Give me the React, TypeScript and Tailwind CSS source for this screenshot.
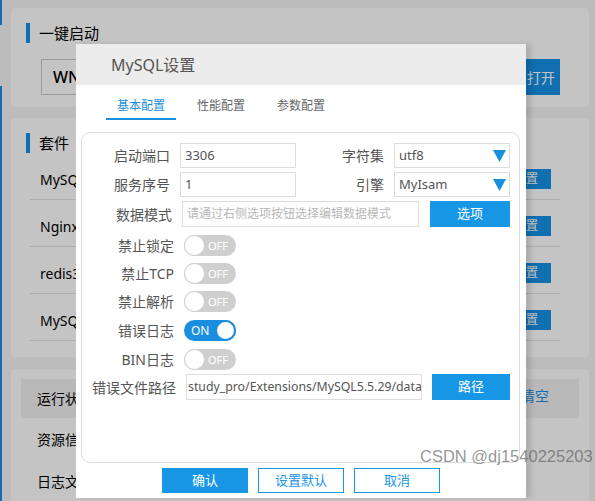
import React from "react";

const FONT = { fontFamily: '"Noto Sans","Noto Sans CJK SC",sans-serif' };

function Toggle({ on }: { on?: boolean }) {
  if (on) {
    return (
      <div className="relative w-[52px] h-[21px] rounded-full bg-[#1a8fe0] flex items-center">
        <span className="ml-[7px] text-[12px] leading-none text-white">ON</span>
        <div className="absolute right-0 top-0 w-[21px] h-[21px] rounded-full bg-white border-2 border-[#1a8fe0]" />
      </div>
    );
  }
  return (
    <div className="relative w-[52px] h-[21px] rounded-full bg-[#cfcfcf] flex items-center justify-end">
      <span className="mr-[8px] text-[11px] leading-none text-white">OFF</span>
      <div className="absolute left-0 top-0 w-[21px] h-[21px] rounded-full bg-white border border-[#cfcfcf]" />
    </div>
  );
}

function Tri() {
  return (
    <svg width="13" height="12" viewBox="0 0 13 12" className="shrink-0">
      <polygon points="0,0 13,0 6.5,12" fill="#1a8fe0" />
    </svg>
  );
}

export default function App() {
  const rows = ["MySQL5.5.29", "Nginx1.15.11", "redis3.0.504", "MySQL8.0.12"];
  return (
    <div className="relative w-[595px] h-[501px] overflow-hidden bg-[#f5f5f5]" style={FONT}>
      {/* page */}
      <div className="flex h-full">
        <div className="w-[2px] flex flex-col shrink-0">
          <div className="h-[25px] bg-[#1591e5]" />
          <div className="h-[61px]" />
          <div className="flex-1 bg-[#1591e5]" />
        </div>
        <div className="flex-1 pl-[9px] pr-[6px]">
          {/* panel 1 */}
          <div className="mt-[8px] h-[99px] bg-white rounded-[4px] pt-[15px] pl-[15px]">
            <div className="flex items-center gap-[9px] h-[20px]">
              <div className="w-[4px] h-[20px] bg-[#1591e5]" />
              <span className="text-[15px] text-black">一键启动</span>
            </div>
            <div className="mt-[16px] ml-[15px] flex h-[36px]">
              <div className="w-[481px] border border-[#c8c8c8] flex items-center pl-[11px] text-[16px] font-medium text-black">
                WNMP
              </div>
              <div className="w-[38px] bg-[#1591e5] text-white text-[14px] flex items-center justify-center">打开</div>
            </div>
          </div>
          {/* panel 2 */}
          <div className="mt-[11px] h-[239px] bg-white rounded-[4px] pt-[15px]">
            <div className="flex items-center gap-[9px] h-[20px] pl-[15px]">
              <div className="w-[4px] h-[20px] bg-[#1591e5]" />
              <span className="text-[15px] text-black">套件</span>
            </div>
            <div className="ml-[19px] w-[530px]">
              {rows.map((r) => (
                <div key={r} className="h-[47px] pt-[6px] border-b border-[#e2e2e2] flex items-center justify-between pl-[10px] pr-[9px]">
                  <span className="text-[14px] text-black">{r}</span>
                  <div className="w-[50px] h-[20px] bg-[#1591e5] text-white text-[12px] flex items-center justify-center">配置</div>
                </div>
              ))}
            </div>
          </div>
          {/* panel 3 */}
          <div className="mt-[12px] h-[200px] bg-white rounded-[4px] p-[10px]">
            <div className="h-[39px] bg-[#f1f1f1] flex items-center justify-between pl-[16px] pr-[30px]">
              <span className="text-[14px] text-black">运行状态</span>
              <span className="text-[14px] text-[#1591e5] -mt-[6px]">清空</span>
            </div>
            <div className="h-[43px] flex items-center pl-[16px] text-[14px] text-black">资源信息</div>
            <div className="h-[40px] flex items-center pl-[16px] text-[14px] text-black">日志文件</div>
          </div>
        </div>
      </div>

      {/* overlay */}
      <div className="absolute inset-0 bg-black/[0.23]" />

      {/* modal */}
      <div className="absolute left-[76px] top-[44px] w-[450px] h-[454px] bg-white shadow-[5px_0_5px_rgba(0,0,0,0.12)] flex flex-col">
        <div className="h-[41px] bg-[#ececec] flex items-center pl-[35px] text-[16px] text-[#555]">MySQL设置</div>
        <div className="flex gap-[10px] pl-[30px] mt-[12px]">
          <div className="w-[70px] h-[23px] text-center text-[12px] text-[#1a8fe0] border-b-2 border-[#1a8fe0]">基本配置</div>
          <div className="w-[70px] h-[23px] text-center text-[12px] text-[#666]">性能配置</div>
          <div className="w-[70px] h-[23px] text-center text-[12px] text-[#666]">参数配置</div>
        </div>
        <div className="ml-[5px] mt-[12px] w-[439px] h-[331px] border border-[#dddddd] rounded-[9px] pt-[10px] text-[#555]">
          {/* row 1 */}
          <div className="flex items-center h-[25px]">
            <div className="w-[88px] text-right text-[14px]">启动端口</div>
            <div className="ml-[10px] w-[116px] h-[25px] border border-[#dddddd] flex items-center pl-[4px] text-[13px]">3306</div>
            <div className="w-[88px] text-right text-[14px]">字符集</div>
            <div className="ml-[10px] w-[116px] h-[25px] border border-[#dddddd] flex items-center justify-between pl-[4px] pr-[3px] text-[13px]">
              <span>utf8</span>
              <Tri />
            </div>
          </div>
          {/* row 2 */}
          <div className="flex items-center h-[25px] mt-[4px]">
            <div className="w-[88px] text-right text-[14px]">服务序号</div>
            <div className="ml-[10px] w-[116px] h-[25px] border border-[#dddddd] flex items-center pl-[4px] text-[13px]">1</div>
            <div className="w-[88px] text-right text-[14px]">引擎</div>
            <div className="ml-[10px] w-[116px] h-[25px] border border-[#dddddd] flex items-center justify-between pl-[4px] pr-[3px] text-[13px]">
              <span>MyIsam</span>
              <Tri />
            </div>
          </div>
          {/* row 3 */}
          <div className="flex items-center h-[26px] mt-[4px]">
            <div className="w-[90px] text-right text-[14px]">数据模式</div>
            <div className="ml-[10px] w-[237px] h-[26px] border border-[#dddddd] flex items-center pl-[4px] text-[12px] text-[#b8b8b8]">
              请通过右侧选项按钮选择编辑数据模式
            </div>
            <div className="ml-[11px] w-[80px] h-[26px] bg-[#1896e6] text-white text-[13px] flex items-center justify-center">选项</div>
          </div>
          {/* toggles */}
          {[
            { l: "禁止锁定", on: false, mt: "mt-[8px]" },
            { l: "禁止TCP", on: false, mt: "mt-[7px]" },
            { l: "禁止解析", on: false, mt: "mt-[7px]" },
            { l: "错误日志", on: true, mt: "mt-[8px]" },
            { l: "BIN日志", on: false, mt: "mt-[8px]" },
          ].map((t) => (
            <div key={t.l} className={`flex items-center h-[21px] ${t.mt}`}>
              <div className="w-[92px] text-right text-[14px]">{t.l}</div>
              <div className="ml-[10px]">
                <Toggle on={t.on} />
              </div>
            </div>
          ))}
          {/* path */}
          <div className="flex items-center h-[26px] mt-[4px]">
            <div className="w-[94px] text-right text-[14px]">错误文件路径</div>
            <div className="ml-[10px] w-[236px] h-[26px] border border-[#dddddd] flex items-center pl-[1px] text-[12.3px] overflow-hidden whitespace-nowrap">
              study_pro/Extensions/MySQL5.5.29/data
            </div>
            <div className="ml-[10px] w-[78px] h-[26px] bg-[#1896e6] text-white text-[13px] flex items-center justify-center">路径</div>
          </div>
        </div>
        <div className="flex gap-[10px] ml-[86px] mt-[5px]">
          <div className="w-[86px] h-[25px] bg-[#1896e6] text-white text-[13px] flex items-center justify-center">确认</div>
          <div className="w-[86px] h-[25px] border border-[#1896e6] text-[#1896e6] text-[13px] flex items-center justify-center">设置默认</div>
          <div className="w-[86px] h-[25px] border border-[#1896e6] text-[#1896e6] text-[13px] flex items-center justify-center">取消</div>
        </div>
      </div>

      {/* watermark */}
      <div className="absolute left-[420px] top-[444px] text-[16.5px] text-[rgba(90,90,90,0.65)] whitespace-nowrap" style={{ fontFamily: '"Liberation Sans",Arial,sans-serif' }}>
        CSDN @dj1540225203
      </div>
    </div>
  );
}
